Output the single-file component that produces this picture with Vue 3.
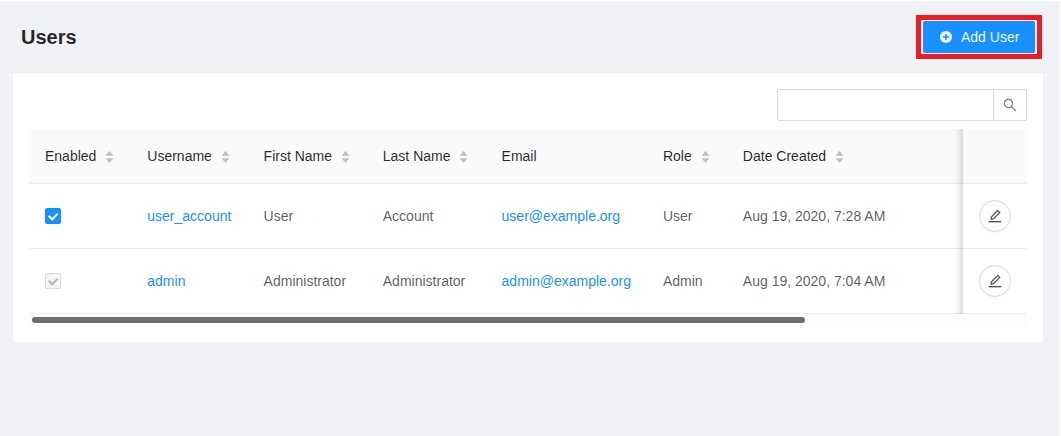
<script setup>
const columns = [
  { key: 'enabled', title: 'Enabled', sortable: true },
  { key: 'username', title: 'Username', sortable: true },
  { key: 'first', title: 'First Name', sortable: true },
  { key: 'last', title: 'Last Name', sortable: true },
  { key: 'email', title: 'Email', sortable: false },
  { key: 'role', title: 'Role', sortable: true },
  { key: 'created', title: 'Date Created', sortable: true },
]
const users = [
  { username: 'user_account', first: 'User', last: 'Account', email: 'user@example.org', role: 'User', created: 'Aug 19, 2020, 7:28 AM', locked: false },
  { username: 'admin', first: 'Administrator', last: 'Administrator', email: 'admin@example.org', role: 'Admin', created: 'Aug 19, 2020, 7:04 AM', locked: true },
]
</script>

<template>
  <div class="page">
    <header class="top">
      <h1>Users</h1>
      <div class="highlight">
        <button class="add">
          <svg viewBox="0 0 14 14" width="14" height="14"><circle cx="7" cy="7" r="6.1" fill="currentColor" /><path d="M7 4v6M4 7h6" stroke="#1890ff" stroke-width="1.5" /></svg>
          <span>Add User</span>
        </button>
      </div>
    </header>
    <main class="card">
      <div class="search">
        <input type="text" aria-label="Search" />
        <button class="search-btn" aria-label="Search">
          <svg viewBox="0 0 1024 1024" width="16" height="16" fill="currentColor"><path d="M909.6 854.5L649.9 594.8C690.2 542.7 712 479 712 412c0-80.2-31.3-155.4-87.9-212.1-56.6-56.7-132-87.9-212.1-87.9s-155.5 31.3-212.1 87.9C143.2 256.5 112 331.8 112 412c0 80.1 31.3 155.5 87.9 212.1C256.5 680.8 331.8 712 412 712c67 0 130.6-21.8 182.7-62l259.7 259.6a8.2 8.2 0 0 0 11.6 0l43.6-43.5a8.2 8.2 0 0 0 0-11.6zM570.4 570.4C528 612.7 471.8 636 412 636s-116-23.3-158.4-65.6C211.3 528 188 471.8 188 412s23.3-116.1 65.6-158.4C296 211.3 352.2 188 412 188s116.1 23.2 158.4 65.6S636 352.2 636 412s-23.3 116.1-65.6 158.4z" /></svg>
        </button>
      </div>
      <div class="table">
        <div class="row head">
          <div v-for="c in columns" :key="c.key" class="cell">
            <span>{{ c.title }}</span>
            <span v-if="c.sortable" class="sorter">
              <svg viewBox="0 0 1024 1024" width="11" height="11" fill="currentColor"><path d="M858.9 689L530.5 308.2c-9.4-10.9-27.5-10.9-37 0L165.1 689c-12.2 14.2-1.2 35 18.5 35h656.8c19.7 0 30.7-20.8 18.5-35z" /></svg>
              <svg viewBox="0 0 1024 1024" width="11" height="11" fill="currentColor"><path d="M840.4 300H183.6c-19.7 0-30.7 20.8-18.5 35l328.5 380.8c9.4 10.9 27.5 10.9 37 0L858.9 335c12.2-14.2 1.2-35-18.5-35z" /></svg>
            </span>
          </div>
          <div class="cell fixed"></div>
        </div>
        <div v-for="u in users" :key="u.username" class="row">
          <div class="cell"><span class="check" :class="{ locked: u.locked }"></span></div>
          <div class="cell"><a>{{ u.username }}</a></div>
          <div class="cell">{{ u.first }}</div>
          <div class="cell">{{ u.last }}</div>
          <div class="cell"><a>{{ u.email }}</a></div>
          <div class="cell">{{ u.role }}</div>
          <div class="cell">{{ u.created }}</div>
          <div class="cell fixed">
            <button class="edit" aria-label="Edit">
              <svg viewBox="0 0 1024 1024" width="16" height="16" fill="currentColor" stroke="currentColor" stroke-width="12"><path d="M257.7 752c2 0 4-.2 6-.5L431.9 722c2-.4 3.9-1.3 5.3-2.8l423.9-423.9a9.96 9.96 0 0 0 0-14.1L694.9 114.9c-1.9-1.9-4.4-2.9-7.1-2.9s-5.2 1-7.1 2.9L256.8 538.8c-1.5 1.5-2.4 3.3-2.8 5.3l-29.5 168.2a33.5 33.5 0 0 0 9.4 29.8c6.6 6.4 14.9 9.9 23.8 9.9zm67.4-174.4L687.8 215l73.3 73.3-362.7 362.6-88.9 15.7 15.6-89zM880 836H144c-17.7 0-32 14.3-32 32v36c0 4.4 3.6 8 8 8h784c4.4 0 8-3.6 8-8v-36c0-17.7-14.3-32-32-32z" /></svg>
            </button>
          </div>
        </div>
      </div>
      <div class="track"><div class="thumb"></div></div>
    </main>
  </div>
</template>

<style>
body { margin: 0; overflow: hidden; }
</style>

<style scoped>
.page, .page *, .page *::before, .page *::after { box-sizing: border-box; }
.page {
  height: 436px;
  padding: 14px 16px 0 13px;
  border-top: 1px solid #fff;
  border-right: 2px solid #f7f8fa;
  background: #eff1f5;
  font: 14px/22px "Liberation Sans", Arial, sans-serif;
  color: rgba(0, 0, 0, 0.65);
}
button { font: inherit; margin: 0; padding: 0; }
svg { display: block; flex: none; }
.top { display: flex; justify-content: space-between; height: 58px; padding: 0 1px 0 8px; }
h1 { margin: 8px 0 0; font-size: 20px; line-height: 28px; font-weight: 700; color: rgba(0, 0, 0, 0.85); }
.highlight { width: 126px; height: 44px; padding: 1px 2px; border: 5px solid #ed1c24; }
.add { display: flex; align-items: center; gap: 8px; width: 112px; height: 32px; padding: 0 15px; border: 1px solid #1890ff; border-radius: 2px; background: #1890ff; color: #fff; white-space: nowrap; }
.add svg, .add span { opacity: 0.92; }
.card { width: 1030px; height: 269px; padding: 16px; background: #fff; }
.search { display: flex; width: 250px; height: 32px; margin: 0 0 8px auto; border: 1px solid #d9d9d9; border-radius: 2px; }
.search input { flex: 1; min-width: 0; border: 0; padding: 0 11px; background: none; outline: 0; }
.search-btn { display: flex; align-items: center; justify-content: center; width: 33px; border: 0; border-left: 1px solid #d9d9d9; background: none; color: rgba(0, 0, 0, 0.5); }
.row { display: grid; grid-template-columns: 102.3px 116.3px 119.2px 118.8px 161.4px 79.9px 1fr 64px; height: 65px; border-bottom: 1px solid #ebebeb; }
.head { height: 55px; background: #fafafa; color: rgba(0, 0, 0, 0.85); }
.cell { display: flex; align-items: center; padding: 0 0 0 16px; white-space: nowrap; }
a { color: #1890ff; }
.sorter { display: flex; flex-direction: column; margin: 1px 0 0 8px; color: #bfbfbf; }
.sorter svg + svg { margin-top: -4px; }
.fixed { position: relative; }
.fixed::before { content: ""; position: absolute; top: 0; bottom: -1px; left: -10px; width: 10px; background: linear-gradient(to left, rgba(0, 0, 0, 0.13), rgba(0, 0, 0, 0.07) 35%, rgba(0, 0, 0, 0.02) 70%, transparent); }
.check { position: relative; width: 16px; height: 16px; border: 1px solid #1890ff; border-radius: 2px; background: #1890ff; }
.check::after { content: ""; position: absolute; top: 50%; left: 22%; width: 5.71px; height: 9.14px; border: 2px solid #fff; border-top: 0; border-left: 0; transform: rotate(45deg) translate(-50%, -50%); }
.check.locked { border-color: #d9d9d9; background: #f5f5f5; }
.check.locked::after { border-color: #b8b8b8; }
.edit { display: flex; align-items: center; justify-content: center; width: 32px; height: 32px; border: 1px solid #d9d9d9; border-radius: 50%; background: #fff; color: rgba(0, 0, 0, 0.65); box-shadow: 0 2px 0 rgba(0, 0, 0, 0.015); }
.track { height: 12px; padding: 3px; background: #fcfcfc; }
.thumb { width: 773px; height: 6px; border-radius: 3px; background: #6f6f6f; }
</style>
